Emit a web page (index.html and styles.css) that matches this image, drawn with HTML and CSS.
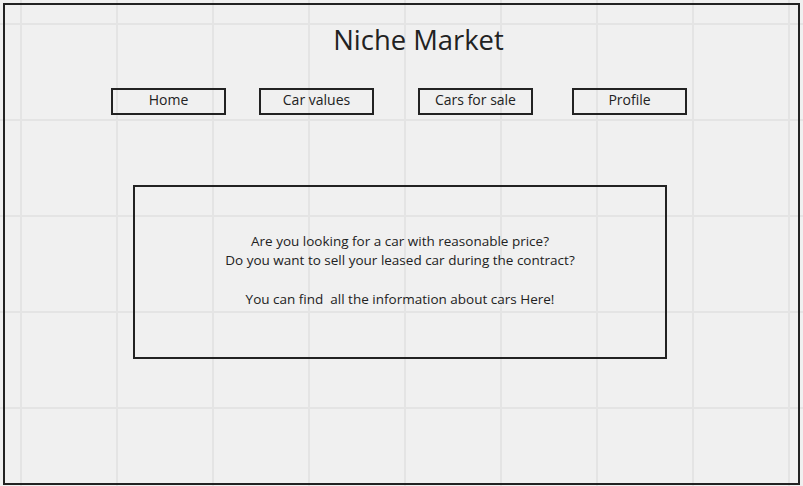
FILE: index.html
```html
<!DOCTYPE html>
<html lang="en">
<head>
<meta charset="utf-8">
<title>Niche Market</title>
<link rel="stylesheet" href="styles.css">
</head>
<body>
  <div class="frame">
    <h1 class="title">Niche Market</h1>
    <nav class="nav">
      <a class="nav-btn nav-home">Home</a>
      <a class="nav-btn nav-values">Car values</a>
      <a class="nav-btn nav-sale">Cars for sale</a>
      <a class="nav-btn nav-profile">Profile</a>
    </nav>
    <section class="intro">
      <p class="intro-text">Are you looking for a car with reasonable price?<br>Do you want to sell your leased car during the contract?<br><br>You can find&nbsp; all the information about cars Here!</p>
    </section>
  </div>
</body>
</html>
```

FILE: styles.css
```css
html, body {
  margin: 0;
  padding: 0;
}
body {
  width: 803px;
  height: 486px;
  overflow: hidden;
  background-color: #f0f0f0;
  background-image:
    linear-gradient(to right, #e4e4e4 0, #e4e4e4 2px, transparent 2px),
    linear-gradient(to bottom, #e4e4e4 0, #e4e4e4 2px, transparent 2px);
  background-size: 96px 100%, 100% 96px;
  background-position: 20px 0, 0 23px;
  font-family: "Open Sans", "Liberation Sans", sans-serif;
  color: #222;
  padding: 3px;
  box-sizing: border-box;
}
.frame {
  box-sizing: border-box;
  width: 797px;
  height: 482px;
  border: 2px solid #222;
  display: flex;
  flex-direction: column;
  align-items: flex-start;
}
.title {
  align-self: stretch;
  margin: 16px 0 0 0;
  font-size: 27.4px;
  line-height: 38px;
  font-weight: 400;
  text-align: center;
  padding-left: 34px;
}
.nav {
  display: flex;
  margin-top: 29px;
  padding-left: 106px;
}
.nav-btn {
  box-sizing: border-box;
  width: 115px;
  height: 27px;
  border: 2px solid #222;
  font-size: 14px;
  line-height: 20px;
  text-align: center;
  color: #222;
}
.nav-values { margin-left: 33px; }
.nav-sale { margin-left: 44px; }
.nav-profile { margin-left: 39px; }
.intro {
  box-sizing: border-box;
  margin: 70px 0 0 128px;
  width: 534px;
  height: 174px;
  border: 2px solid #222;
  display: flex;
  align-items: center;
  justify-content: center;
}
.intro-text {
  margin: 0 0 3px 0;
  font-size: 13.5px;
  line-height: 19.3px;
  text-align: center;
}
```
